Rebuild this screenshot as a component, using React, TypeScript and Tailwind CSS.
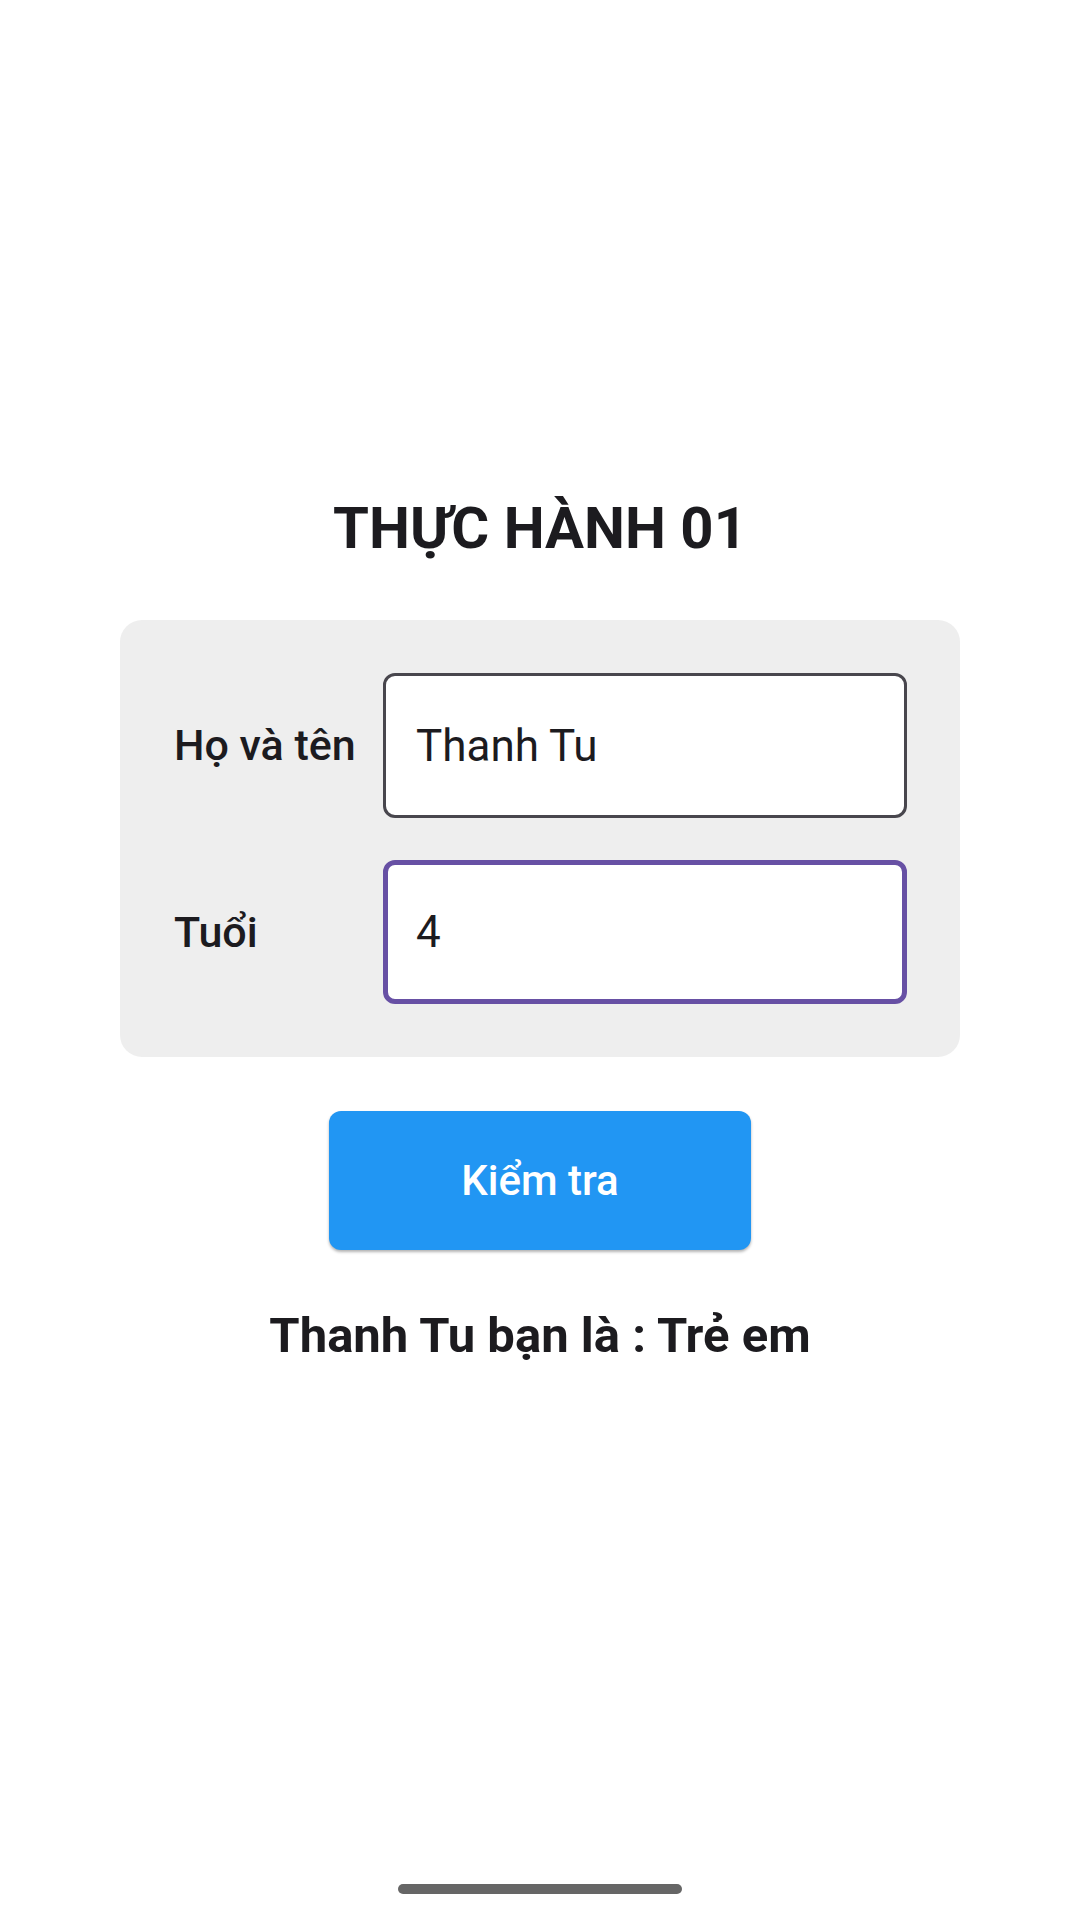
import React from "react";

export default function App() {
  return (
    <div
      className="relative w-[1080px] h-[1920px] bg-white flex flex-col items-center text-[#1c1b1f]"
      style={{ fontFamily: "Roboto, 'Noto Sans', sans-serif" }}
    >
      <h1 className="mt-[499px] text-[58px] leading-none font-bold tracking-normal">
        THỰC HÀNH 01
      </h1>

      <div className="mt-[63px] w-[840px] bg-[#eeeeee] rounded-[22px] pl-[54px] pr-[53px] py-[53px] flex flex-col gap-[42px]">
        <div className="flex items-center">
          <div className="w-[209px] shrink-0 text-[43px] leading-none font-medium">Họ và tên</div>
          <div className="flex-1 h-[145px] bg-white border-[3px] border-[#48464d] rounded-[12px] flex items-center pl-[30px] text-[44px] font-normal">
            Thanh Tu
          </div>
        </div>
        <div className="flex items-center">
          <div className="w-[209px] shrink-0 text-[43px] leading-none font-medium">Tuổi</div>
          <div className="flex-1 h-[144px] bg-white border-[5px] border-[#6750a4] rounded-[12px] flex items-center pl-[28px] text-[44px] font-normal">
            4
          </div>
        </div>
      </div>

      <button className="mt-[54px] w-[422px] h-[139px] bg-[#2196f3] rounded-[12px] text-white text-[42px] font-medium shadow-[0_2px_3px_rgba(0,0,0,0.3)] flex items-center justify-center">
        Kiểm tra
      </button>

      <div className="mt-[61px] text-[49px] leading-none font-bold">Thanh Tu bạn là : Trẻ em</div>

      <div className="absolute left-[398px] top-[1884px] w-[284px] h-[10px] rounded-full bg-[#666666]" />
    </div>
  );
}
